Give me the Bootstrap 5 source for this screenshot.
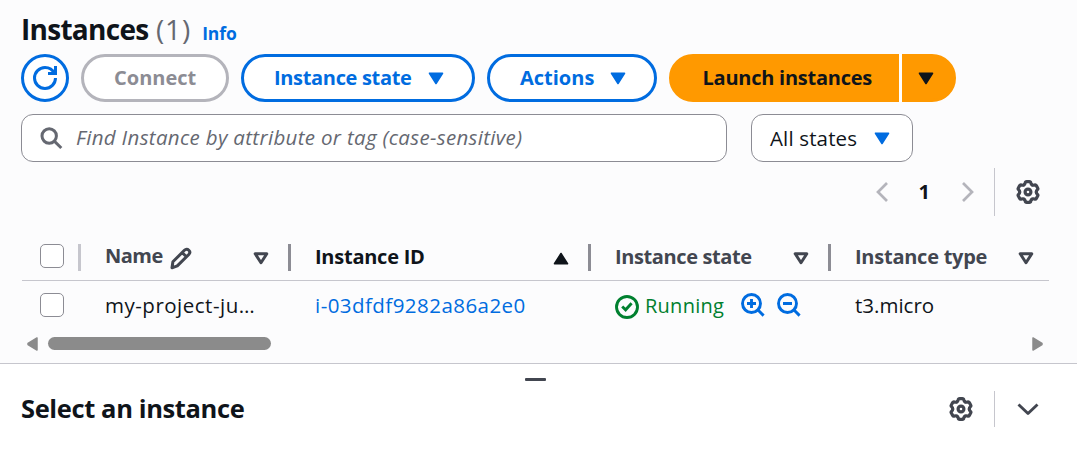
<!DOCTYPE html>
<html lang="en">
<head>
<meta charset="utf-8">
<meta name="viewport" content="width=device-width, initial-scale=1">
<title>Instances</title>
<link href="https://cdn.jsdelivr.net/npm/bootstrap@5.3.0/dist/css/bootstrap.min.css" rel="stylesheet">
<style>
  :root { --blue:#006ce0; --ink:#0f141a; --slate:#424650; --grey:#8c8c94; --line:#c6c6cd; }
  body { font-family:"Open Sans","Noto Sans",sans-serif; font-size:20px; line-height:28px; color:var(--ink); background:#fff; height:466px; overflow:hidden; }
  svg { display:block; flex:none; }
  .ln { fill:none; stroke:currentColor; }
  .console { height:364px; background:#fcfcfd; border-bottom:1px solid var(--line); padding:10px 28px 0 21px; }
  h1 { font-size:28px; line-height:38px; font-weight:700; letter-spacing:-.72px; margin:0; }
  .count { font-size:28px; line-height:38px; color:#656871; letter-spacing:.9px; margin-left:7.5px; }
  .info { font-size:17.5px; font-weight:700; color:var(--blue); text-decoration:none; margin-left:11px; letter-spacing:-.1px; }
  .tool { height:48px; border:3px solid var(--blue); border-radius:24px; background:#fff; color:var(--blue); font-size:20px; line-height:26px; font-weight:700; padding:0 30px 1px; display:flex; align-items:center; justify-content:space-between; white-space:nowrap; }
  .tool svg { position:relative; top:1px; }
  .w-refresh { width:48px; padding:0; justify-content:center; }
  .w-refresh svg { top:0; }
  .w-connect { width:148px; }
  .w-state { width:234px; padding-right:28px; letter-spacing:-.33px; }
  .w-actions { width:170px; padding-right:28px; }
  .tool.off { border-color:#b4b4bb; color:var(--grey); opacity:1; }
  .tool.go { background:#ff9900; border-color:#ff9900; color:var(--ink); border-radius:0; }
  .go.main { width:230px; border-radius:24px 0 0 24px; letter-spacing:-.25px; padding-left:30.5px; }
  .go.more { width:54px; border-radius:0 24px 24px 0; padding:0 0 1px 13px; }
  .split { gap:3px; background:linear-gradient(#fff,#fff) 230px 0/3px 48px no-repeat; }
  .field { height:48px; border:1px solid var(--grey); border-radius:12px; background:#fff; padding-bottom:2px; }
  .find { width:706px; padding-left:17px; color:#656871; }
  .find span { font-style:italic; font-size:20.5px; letter-spacing:.33px; margin-left:13px; }
  .find svg { position:relative; top:1px; }
  .states { width:162px; padding:0 22px 0 18px; letter-spacing:.15px; font-size:20.5px; }
  .pager { height:48px; margin-top:6px; padding-right:9px; }
  .rule { width:1px; background:var(--line); }
  .dim { color:#b4b4bb; }
  .slate { color:var(--slate); }
  .grid-table { width:1027px; margin:23px 0 0 1px; table-layout:fixed; border-collapse:collapse; }
  .grid-table th, .grid-table td { padding:0; height:41px; font-size:20px; white-space:nowrap; }
  .grid-table thead tr { border-bottom:1px solid var(--line); }
  .grid-table td { height:48px; }
  .hd { height:40px; padding-left:24px; color:var(--slate); letter-spacing:-.25px; }
  .hd .lbl { position:relative; top:-2px; }
  .hd .sort { margin:-2px 19px 0 auto; }
  .split-bar { width:3px; height:27px; margin-top:-4px; background:var(--grey); }
  .form-check-input.pick { width:24px; height:24px; border:1.4px solid var(--grey); border-radius:5px; margin:0; background-color:#fff; }
  .cell { padding-left:24px; height:48px; }
  .ok { color:#00802f; }
  .scroll { color:#8b8b8b; height:14px; margin:8px 6px 0; }
  .thumb { width:223px; height:13px; border-radius:7px; background:#8b8b8b; margin-left:10px; }
  .grip { width:21px; height:3px; border-radius:1px; background:var(--slate); margin:13.5px auto 0; position:relative; left:-3.5px; }
  .panel { height:36px; padding:0 38px 0 21px; margin-top:10.5px; }
  h2 { font-size:25.5px; line-height:34px; font-weight:700; letter-spacing:-.38px; margin:0 0 2px; }
</style>
</head>
<body>
<svg width="0" height="0" class="position-absolute">
  <defs>
    <path id="tooth" d="M7.85 4.81Q9.1 4.1 9.2 2.9 9.4 1.6 10.7 1.6H13.3Q14.6 1.6 14.8 2.9 14.9 4.1 16.15 4.81"/>
    <symbol id="gear" viewBox="0 0 24 24">
      <g class="ln" stroke-width="3.2" stroke-linecap="round">
        <use href="#tooth"/><use href="#tooth" transform="rotate(60 12 12)"/><use href="#tooth" transform="rotate(120 12 12)"/>
        <use href="#tooth" transform="rotate(180 12 12)"/><use href="#tooth" transform="rotate(240 12 12)"/><use href="#tooth" transform="rotate(300 12 12)"/>
        <circle cx="12" cy="12" r="2.9"/>
      </g>
    </symbol>
    <symbol id="down" viewBox="0 0 16 13"><path d="M1.5 1.2h13L8 11.5z" fill="currentColor" stroke="currentColor" stroke-width="1.6" stroke-linejoin="round"/></symbol>
    <symbol id="hollow" viewBox="0 0 16 13"><path class="ln" d="M2.2 1.8h11.6L8 10.7z" stroke-width="3" stroke-linejoin="round"/></symbol>
  </defs>
</svg>

<main class="console">
  <div class="d-flex align-items-baseline">
    <h1>Instances</h1><span class="count">(1)</span><a class="info" href="#">Info</a>
  </div>

  <div class="d-flex" style="gap:12px;margin-top:6px">
    <button class="tool w-refresh" aria-label="Refresh">
      <svg width="24" height="24" viewBox="0 0 16 16" class="ln" stroke-width="2"><path d="M15 8c0 3.87-3.13 7-7 7s-7-3.13-7-7 3.13-7 7-7c2.79 0 5.2 1.63 6.33 4"/><path d="M10 5h5V0"/></svg>
    </button>
    <button class="tool w-connect off" disabled>Connect</button>
    <button class="tool w-state">Instance state<svg width="16" height="13"><use href="#down"/></svg></button>
    <button class="tool w-actions">Actions<svg width="16" height="13"><use href="#down"/></svg></button>
    <div class="d-flex split">
      <button class="tool go main">Launch instances</button>
      <button class="tool go more" aria-label="More launch options"><svg width="16" height="13"><use href="#down"/></svg></button>
    </div>
  </div>

  <div class="d-flex gap-4" style="margin-top:12px">
    <div class="field find d-flex align-items-center">
      <svg width="24" height="24" class="ln" stroke-width="3"><circle cx="10.2" cy="10" r="7.2"/><path d="M15.3 15.2l7 6.8"/></svg>
      <span>Find Instance by attribute or tag (case-sensitive)</span>
    </div>
    <div class="field states d-flex align-items-center justify-content-between">All states<svg width="16" height="13" style="color:var(--blue)"><use href="#down"/></svg></div>
  </div>

  <div class="pager d-flex justify-content-end align-items-center">
    <svg class="ln dim" width="12" height="20" stroke-width="2.7"><path d="M11 1L2 10l9 9"/></svg>
    <b style="margin:0 32px 1px 31px">1</b>
    <svg class="ln dim" width="12" height="20" stroke-width="2.7"><path d="M1 1l9 9-9 9"/></svg>
    <div class="rule h-100" style="margin:0 21px 0 20px"></div>
    <svg class="slate" width="24" height="24"><use href="#gear"/></svg>
  </div>

  <table class="grid-table">
    <colgroup><col style="width:59px"><col style="width:210px"><col style="width:300px"><col style="width:240px"><col style="width:218px"></colgroup>
    <thead>
      <tr>
        <th><div class="hd d-flex align-items-center" style="padding-left:18px"><input class="form-check-input pick" style="margin-top:-6px" type="checkbox" aria-label="Select all"><i class="split-bar ms-auto" style="background:var(--line)"></i></div></th>
        <th><div class="hd d-flex align-items-center"><span class="lbl" style="top:-3px;letter-spacing:-.5px">Name</span>
          <svg class="ln" style="margin:-1px 0 0 7px" width="23" height="23" viewBox="0 0 23 23" stroke-width="3" stroke-linejoin="round"><path d="M2 20.800l.900-6L14.400 3.300c1.400-1.400 3.100-1.400 4.400-.100s1.300 3 0 4.300L7.300 18.900z M12.200 5.600l4.200 4.200"/></svg>
          <svg class="sort" width="16" height="13"><use href="#hollow"/></svg><i class="split-bar"></i></div></th>
        <th><div class="hd d-flex align-items-center" style="color:var(--ink)"><span class="lbl">Instance ID</span>
          <svg class="sort" width="16" height="13"><use href="#down" transform="rotate(180 8 6.500)"/></svg><i class="split-bar"></i></div></th>
        <th><div class="hd d-flex align-items-center"><span class="lbl" style="letter-spacing:-.38px">Instance state</span>
          <svg class="sort" width="16" height="13"><use href="#hollow"/></svg><i class="split-bar"></i></div></th>
        <th><div class="hd d-flex align-items-center"><span class="lbl">Instance type</span>
          <svg class="sort" style="margin-right:15px" width="16" height="13"><use href="#hollow"/></svg></div></th>
      </tr>
    </thead>
    <tbody>
      <tr>
        <td><div class="cell d-flex align-items-center" style="padding-left:18px"><input class="form-check-input pick" type="checkbox" aria-label="Select instance"></div></td>
        <td><div class="cell d-flex align-items-center"><span style="font-size:20.5px;letter-spacing:.5px">my-project-ju…</span></div></td>
        <td><div class="cell d-flex align-items-center" style="color:var(--blue);font-size:20.5px;letter-spacing:.45px">i-03dfdf9282a86a2e0</div></td>
        <td><div class="cell d-flex align-items-center ok">
          <svg class="ln" style="margin-top:4px" width="24" height="24" stroke-width="2.9"><circle cx="12" cy="12" r="10.500"/><path d="M7.200 11.500l3.400 3.300 6-6.500"/></svg>
          <span style="margin:3px 0 0 6px;letter-spacing:.25px">Running</span>
          <svg class="ln" style="color:var(--blue);margin-left:17px" width="24" height="24" stroke-width="2.900"><circle cx="10.500" cy="10.500" r="9"/><path d="M16.800 16.800l5.800 5.800M6 10.500h9M10.500 6v9"/></svg>
          <svg class="ln" style="color:var(--blue);margin-left:12px" width="24" height="24" stroke-width="2.900"><circle cx="10.500" cy="10.500" r="9"/><path d="M16.800 16.800l5.800 5.800M6 10.500h9"/></svg>
        </div></td>
        <td><div class="cell d-flex align-items-center" style="font-size:20.500px;padding-top:1px">t3.micro</div></td>
      </tr>
    </tbody>
  </table>

  <div class="scroll d-flex">
    <svg width="11" height="14"><path d="M10 1v12L1 7.500v-1z" fill="currentColor" stroke="currentColor" stroke-width="1.500" stroke-linejoin="round"/></svg>
    <div class="thumb"></div>
    <svg class="ms-auto" width="11" height="14"><path d="M1 1v12l9-5.500v-1z" fill="currentColor" stroke="currentColor" stroke-width="1.500" stroke-linejoin="round"/></svg>
  </div>
</main>

<div class="grip"></div>
<section class="panel d-flex align-items-center slate">
  <h2 style="color:var(--ink)">Select an instance</h2>
  <svg class="ms-auto" width="24" height="24"><use href="#gear"/></svg>
  <div class="rule h-100" style="margin:0 22px 0 21px"></div>
  <svg class="ln" width="22" height="14" stroke-width="2.900" stroke-linejoin="round"><path d="M1.500 2.500l9.500 9 9.500-9"/></svg>
</section>
<script src="https://cdn.jsdelivr.net/npm/bootstrap@5.3.0/dist/js/bootstrap.bundle.min.js"></script>
</body>
</html>
